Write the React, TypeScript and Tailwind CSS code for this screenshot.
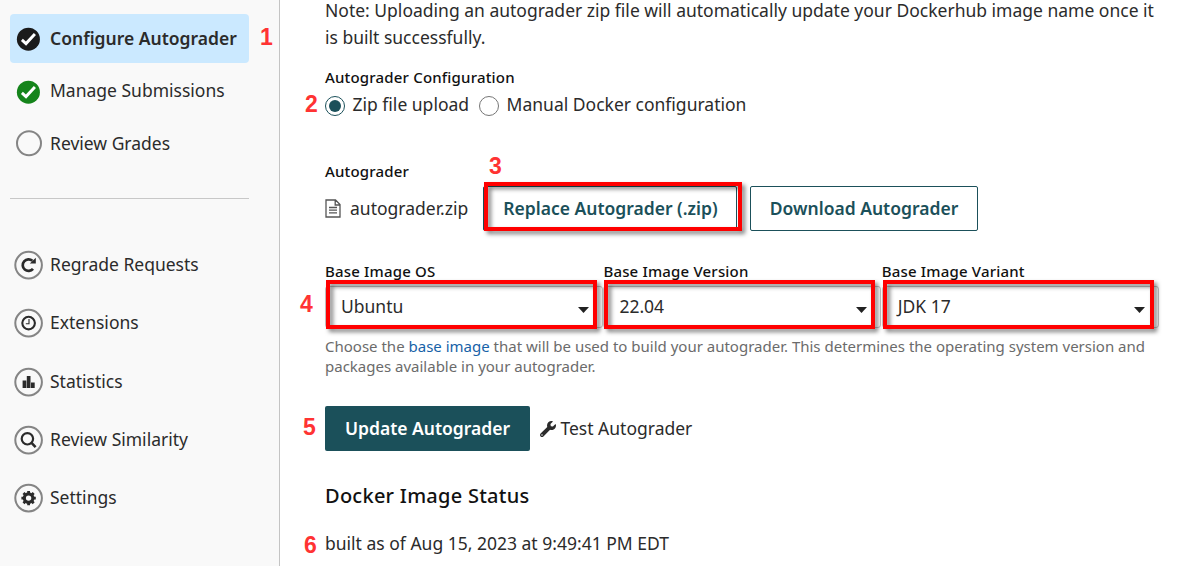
import React from "react";
import { FaWrench } from "react-icons/fa";

function CheckIcon({ color }: { color: string }) {
  return (
    <svg width="30" height="30" viewBox="0 0 30 30" className="mt-px shrink-0">
      <circle cx="15.4" cy="15.200" r="11.5" fill={color} />
      <path d="M8.900 15.900 L13 19.600 L21.900 10.100" fill="none" stroke="#fff" strokeWidth="2.900" />
    </svg>
  );
}

function Ring({ children }: { children?: React.ReactNode }) {
  return (
    <svg width="30" height="30" viewBox="0 0 30 30" className="shrink-0">
      <g transform={children ? "translate(0.6 0.1)" : "translate(1 -0.7)"}>
        <circle cx="15" cy="15" r={children ? 13.3 : 12} fill="none" stroke="#858585" strokeWidth="2" />
        {children}
      </g>
    </svg>
  );
}

const tools = [
  {
    label: "Regrade Requests",
    icon: (
      <>
        <path d="M19.400 18.700 A5.800 5.800 0 1 1 18.800 10.700" fill="none" stroke="#2b2b2b" strokeWidth="2.700" />
        <path d="M22.200 7.600 V13.400 H16.200 Z" fill="#2b2b2b" />
      </>
    ),
  },
  {
    label: "Extensions",
    icon: (
      <>
        <circle cx="15" cy="15" r="6.3" fill="none" stroke="#2b2b2b" strokeWidth="2.1" />
        <path d="M15.400 10.800 V15.600 H12.200" fill="none" stroke="#2b2b2b" strokeWidth="1.1" />
      </>
    ),
  },
  {
    label: "Statistics",
    icon: <path d="M9 13.500h3.700v7.300H9z M13.200 8.800h3.700v12h-3.700z M17.400 15.400h3.700v5.400h-3.700z" fill="#2b2b2b" />,
  },
  {
    label: "Review Similarity",
    icon: (
      <>
        <circle cx="13.800" cy="13.700" r="5.700" fill="none" stroke="#2b2b2b" strokeWidth="2.2" />
        <path d="M17.700 17.600 L22 22" stroke="#2b2b2b" strokeWidth="2.600" />
      </>
    ),
  },
  {
    label: "Settings",
    icon: (
      <>
        <circle cx="15" cy="15" r="4.3" fill="none" stroke="#2b2b2b" strokeWidth="3.2" />
        <path
          d="M15 7.800V10 M15 20V22.200 M7.800 15H10 M20 15H22.200 M9.900 9.900L11.500 11.500 M18.500 18.500L20.100 20.100 M9.900 20.100L11.500 18.500 M18.500 11.500L20.100 9.900"
          stroke="#2b2b2b"
          strokeWidth="2.8"
        />
      </>
    ),
  },
];

const selects = [
  { label: "Base Image OS", value: "Ubuntu" },
  { label: "Base Image Version", value: "22.04" },
  { label: "Base Image Variant", value: "JDK 17" },
];

function Label({ children, className = "" }: { children: React.ReactNode; className?: string }) {
  return (
    <h3 className={`h-5 text-[15px] leading-5 font-medium tracking-[0.18px] text-[#111] ${className}`}>{children}</h3>
  );
}

function Mark({ n, className }: { n: number; className: string }) {
  return (
    <span
      className={`absolute text-[23px] leading-[22px] font-bold text-[#ff3333] font-['Liberation_Sans',sans-serif] ${className}`}
    >
      {n}
    </span>
  );
}

function Highlight({ className }: { className: string }) {
  return (
    <span
      className={`pointer-events-none absolute border-4 border-[#ff0000] drop-shadow-[3px_3px_2px_rgba(0,0,0,0.5)] ${className}`}
    />
  );
}

export default function App() {
  return (
    <div className="relative flex h-[566px] w-[1188px] overflow-hidden bg-white font-['Noto_Sans',sans-serif] text-[17.5px] text-[#2b2b2b]">
      <aside className="flex w-[280px] shrink-0 flex-col border-r border-[#c4c4c4] bg-[#f9f9f9] pt-3.5 pr-[30px] pl-2.5">
        <div className="flex h-[49px] items-center gap-[7px] rounded-[4px] bg-[#cbe9ff] pl-[3px] font-semibold whitespace-nowrap">
          <CheckIcon color="#1b1b1b" />
          <span>Configure Autograder</span>
        </div>
        <div className="mt-[2px] flex h-[52px] items-center gap-[7px] pl-[3px]">
          <CheckIcon color="#15841b" />
          <span className="pb-px">Manage Submissions</span>
        </div>
        <div className="flex h-[53px] items-center gap-[7px] pl-[3px]">
          <Ring />
          <span>Review Grades</span>
        </div>
        <div className="mt-[28px] border-t border-[#c8c8c8]" />
        <nav className="mt-[37px]">
          {tools.map((t) => (
            <div key={t.label} className="flex h-[58.25px] items-center gap-[7px] pl-[3px]">
              <Ring>{t.icon}</Ring>
              <span className="pb-0.5">{t.label}</span>
            </div>
          ))}
        </nav>
      </aside>

      <main className="-mt-[3px] flex grow flex-col pl-[45px]">
        <p className="leading-[27px] whitespace-nowrap">
          Note: Uploading an autograder zip file will automatically update your Dockerhub image name once it
          <br />
          is built successfully.
        </p>
        <Label className="mt-[16px]">Autograder Configuration</Label>
        <div className="mt-[5px] flex h-[26px] items-center">
          <span className="mt-px flex size-5 items-center justify-center rounded-full border border-[#1b505a]">
            <span className="size-3 rounded-full bg-[#1b505a]" />
          </span>
          <span className="-mt-px ml-[7.500px]">Zip file upload</span>
          <span className="mt-px ml-2.5 size-5 rounded-full border border-[#767676]" />
          <span className="-mt-px ml-[7.500px]">Manual Docker configuration</span>
        </div>

        <Label className="mt-[43px]">Autograder</Label>
        <div className="mt-[5px] flex h-[45px] items-center">
          <svg width="16" height="19" viewBox="0 0 16 19" fill="none" stroke="#555" strokeWidth="1.3">
            <path d="M1 1H10.500L15 5.500V18H1Z M10.200 1V6H15 M4 8.500H12 M4 11.200H12 M4 13.900H12" />
          </svg>
          <span className="ml-[9px]">autograder.zip</span>
          <div className="relative ml-auto flex h-[45px] w-[254px] items-center justify-center rounded-[2px] border border-[#1b505a] pl-px font-semibold text-[#1b505a]">
            Replace Autograder (.zip)
            <Highlight className="-top-[5px] left-0 h-[49px] w-[258px]" />
          </div>
          <div className="mr-[210px] ml-[13px] flex h-[45px] w-[228px] items-center justify-center rounded-[2px] border border-[#1b505a] font-semibold text-[#1b505a]">
            Download Autograder
          </div>
        </div>

        <div className="mt-[30px] flex">
          {selects.map((s) => (
            <div key={s.label} className="w-[278.4px]">
              <Label>{s.label}</Label>
              <div className="relative mt-[5px] flex h-[42px] w-[277.5px] items-center justify-between rounded-[3px] border border-[#c4c4c4] pr-[13px] pl-[15px]">
                <span className="pb-px">{s.value}</span>
                <svg width="11" height="6" viewBox="0 0 11 6" className="mt-[5px]">
                  <path d="M0 0H11L5.500 6Z" fill="#222" />
                </svg>
                <Highlight className="-top-[7px] left-0 h-[49px] w-[271px]" />
              </div>
            </div>
          ))}
        </div>
        <p className="mt-[8px] text-[15px] leading-5 whitespace-nowrap text-[#6b6b6b]">
          Choose the <a className="text-[#1762a8]">base image</a> that will be used to build your autograder. This
          determines the operating system version and
          <br />
          packages available in your autograder.
        </p>

        <div className="mt-[30px] flex h-[45px] items-center">
          <div className="flex h-[45px] w-[205px] items-center justify-center rounded-[2px] bg-[#1b505a] font-semibold text-white">
            Update Autograder
          </div>
          <FaWrench className="ml-2.5 size-4" />
          <span className="ml-[4.500px]">Test Autograder</span>
        </div>

        <h2 className="mt-[30px] h-[30px] text-[20px] leading-[30px] font-medium tracking-[0.26px] text-[#111]">
          Docker Image Status
        </h2>
        <p className="mt-[19px] leading-[26px]">built as of Aug 15, 2023 at 9:49:41 PM EDT</p>
      </main>

      <Mark n={1} className="top-[26px] left-[260px]" />
      <Mark n={2} className="top-[93px] left-[305px]" />
      <Mark n={3} className="top-[155px] left-[489px]" />
      <Mark n={4} className="top-[293px] left-[300px]" />
      <Mark n={5} className="top-[416px] left-[303px]" />
      <Mark n={6} className="top-[534px] left-[304px]" />
    </div>
  );
}
